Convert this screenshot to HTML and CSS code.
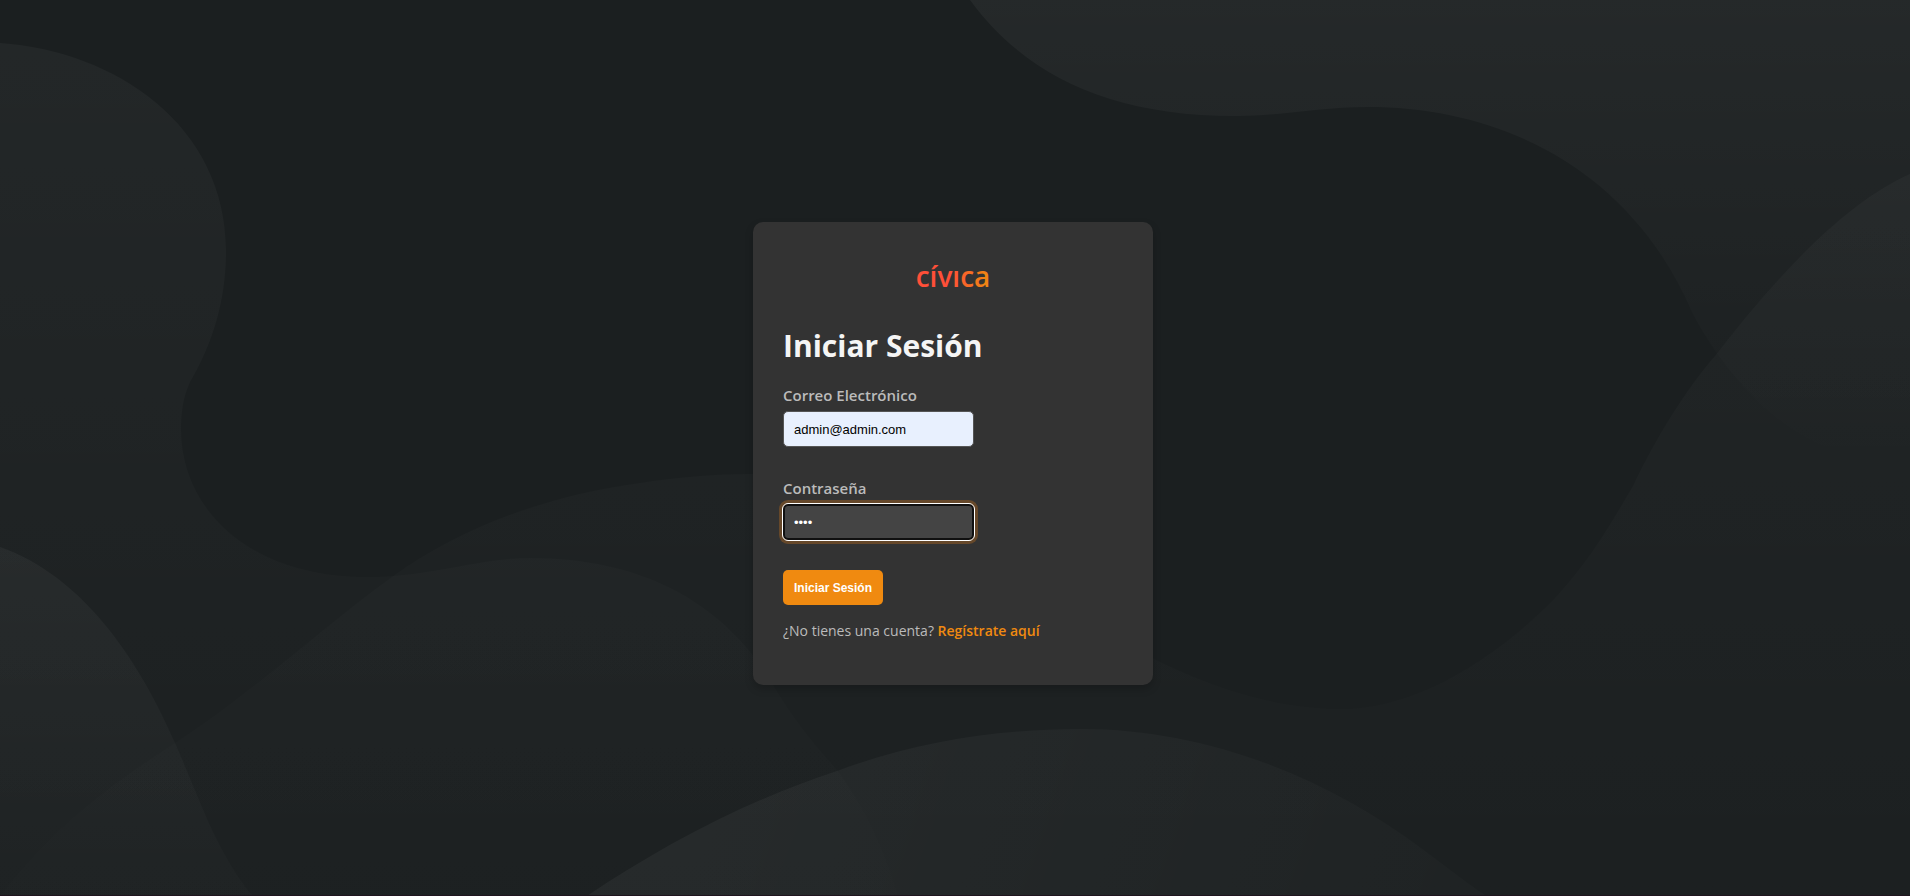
FILE: index.html
```html
<!DOCTYPE html>
<html lang="es">
<head>
<meta charset="utf-8">
<title>Iniciar Sesión</title>
<link rel="stylesheet" href="styles.css">
</head>
<body>
<svg class="backdrop" viewBox="0 0 1910 896" preserveAspectRatio="none" aria-hidden="true">
  <defs>
    <linearGradient id="fade-left" gradientUnits="userSpaceOnUse" x1="0" y1="43" x2="0" y2="896"><stop offset="0" stop-color="#fff" stop-opacity=".036"/><stop offset="1" stop-color="#fff" stop-opacity=".003"/></linearGradient>
    <linearGradient id="fade-right" gradientUnits="userSpaceOnUse" x1="0" y1="174" x2="0" y2="896"><stop offset="0" stop-color="#fff" stop-opacity=".028"/><stop offset="1" stop-color="#fff" stop-opacity=".004"/></linearGradient>
    <linearGradient id="fade-top" gradientUnits="userSpaceOnUse" x1="0" y1="0" x2="0" y2="470"><stop offset="0" stop-color="#fff" stop-opacity=".044"/><stop offset="1" stop-color="#fff" stop-opacity="0"/></linearGradient>
    <linearGradient id="fade-corner" gradientUnits="userSpaceOnUse" x1="0" y1="547" x2="0" y2="896"><stop offset="0" stop-color="#fff" stop-opacity=".04"/><stop offset="1" stop-color="#fff" stop-opacity=".012"/></linearGradient>
    <linearGradient id="fade-bottom" gradientUnits="userSpaceOnUse" x1="700" y1="740" x2="1400" y2="1000"><stop offset="0" stop-color="#fff" stop-opacity=".042"/><stop offset="1" stop-color="#fff" stop-opacity=".015"/></linearGradient>
  </defs>
  <path fill="url(#fade-left)" d="M0 43C115 51 226 125 226 251C226 310 207 353 190 382C184 395 181 410 181 429C181 510 250 577 367 577C430 577 477 558 531 558C650 558 730 610 773 685C795 722 815 745 837 770C862 803 885 850 898 896H0Z"/>
  <path fill="url(#fade-right)" d="M0 896C60 820 115 782 175 743C250 695 325 625 392 577C465 525 550 495 640 483C920 440 1010 560 1152 658C1230 697 1290 709 1343 709C1410 709 1490 665 1556 597C1590 560 1610 525 1633 486C1655 440 1685 390 1715 356C1770 285 1840 205 1910 174V896Z"/>
  <path fill="url(#fade-top)" d="M970 0C1025 75 1110 116 1236 116C1282 116 1320 107 1368 107C1500 107 1630 168 1692 312C1720 367 1765 415 1805 437C1840 457 1875 466 1910 470V0Z"/>
  <path fill="url(#fade-corner)" d="M0 547C80 575 137 655 175 743C191 779 204 815 219 844C230 865 242 884 253 896H0Z"/>
  <path fill="url(#fade-bottom)" d="M587 896C660 847 745 801 837 771C920 740 1003 729 1081 729C1210 729 1330 780 1421 848C1443 864 1464 881 1486 896Z"/>
</svg>
<main class="page">
  <section class="card">
    <svg class="logo" viewBox="0 0 80 48" role="img" aria-label="cívica">
      <defs><linearGradient id="brand"><stop offset=".45" stop-color="#ff4f38"/><stop offset="1" stop-color="#ee8a10"/></linearGradient></defs>
      <text class="logo-text" x="40" y="35" text-anchor="middle" fill="url(#brand)">cívıca</text>
    </svg>
    <h1 class="title">Iniciar Sesión</h1>
    <form class="form">
      <div class="field">
        <label class="label" for="email">Correo Electrónico</label>
        <input class="input input-filled" id="email" type="email" value="admin@admin.com">
      </div>
      <div class="field">
        <label class="label" for="password">Contraseña</label>
        <input class="input input-active" id="password" type="password" value="1234">
      </div>
      <button class="submit" type="button">Iniciar Sesión</button>
    </form>
    <p class="signup">¿No tienes una cuenta? <a class="link" href="#">Regístrate aquí</a></p>
  </section>
</main>
</body>
</html>
```
FILE: styles.css
```css
* { box-sizing: border-box; }
body {
  margin: 0;
  background: #1b1f20;
  color: #bbb;
  font-family: "Open Sans", "Noto Sans", sans-serif;
}
.backdrop {
  position: absolute;
  inset: 0;
  width: 100%;
  height: 100%;
}
.page {
  position: relative;
  display: flex;
  align-items: center;
  justify-content: center;
  min-height: 100vh;
  padding: 12px 4px 0 0;
  border-bottom: 1px solid #20151f;
}
.card {
  display: flex;
  flex-direction: column;
  width: 400px;
  padding: 30px 30px 44px;
  border-radius: 10px;
  background: #333;
  box-shadow: 0 4px 8px rgba(0, 0, 0, .2);
}
.logo {
  align-self: center;
  width: 80px;
  height: 48px;
}
.logo-text {
  font-family: "Open Sans", sans-serif;
  font-size: 28px;
  font-weight: 600;
}
.title {
  margin: 24px 0 16px;
  color: #f5f5f5;
  font-size: 30px;
  font-weight: 700;
  line-height: 44px;
}
.form {
  display: flex;
  flex-direction: column;
  align-items: flex-start;
  gap: 30px;
}
.field {
  display: flex;
  flex-direction: column;
  gap: 5px;
}
.label {
  color: #bbb;
  font-size: 15px;
  font-weight: 600;
  line-height: 22px;
}
.input {
  width: 191px;
  height: 36px;
  padding: 0 10px;
  border: 1px solid #555;
  border-radius: 5px;
  background: #444;
  color: #fff;
  font-family: "Liberation Sans", Arial, sans-serif;
  font-size: 13px;
}
.input-filled {
  background: #e8f0fe;
  color: #000;
}
.input-active {
  padding: 0 9px;
  border: 2px solid #101010;
  outline: 1px solid #fff;
  box-shadow: 0 0 0 4px #66482a;
}
.submit {
  height: 35px;
  padding: 0 11px;
  border: 0;
  border-radius: 5px;
  background: #f08a10;
  color: #fff;
  font-family: "Liberation Sans", Arial, sans-serif;
  font-size: 12px;
  font-weight: 700;
}
.signup {
  margin: 16px 0 0;
  font-size: 14px;
  line-height: 20px;
}
.link {
  color: #f08a10;
  font-weight: 600;
  text-decoration: none;
}
```
